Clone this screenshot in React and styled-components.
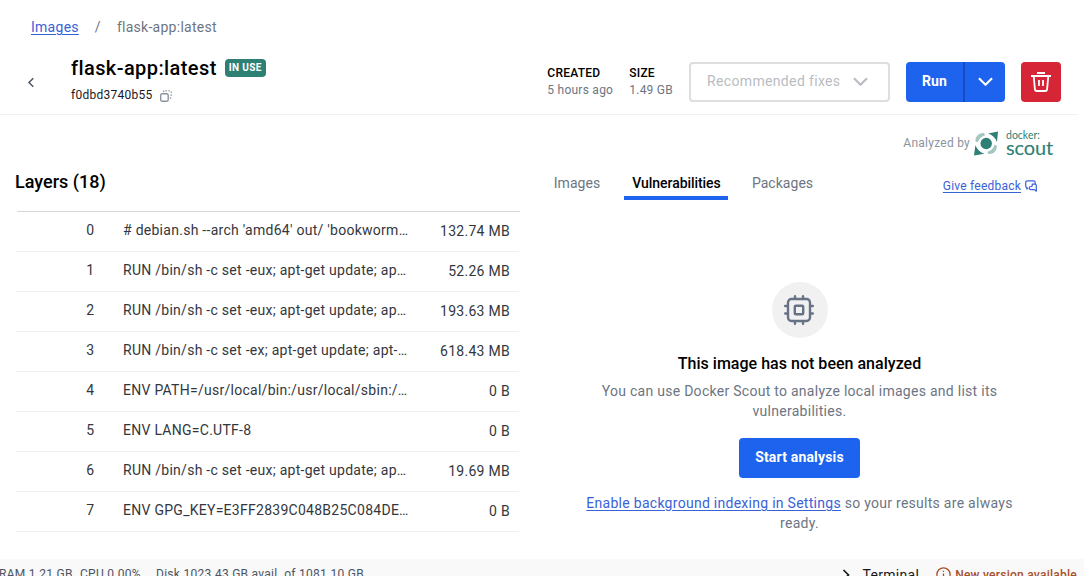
import React from "react";
import styled, { createGlobalStyle } from "styled-components";

const GlobalStyle = createGlobalStyle`
  *, *::before, *::after { box-sizing: border-box; }
  html, body { margin: 0; padding: 0; overflow: hidden; }
  body { background: #fff; color: #000; font-family: Roboto, "Liberation Sans", sans-serif; font-size: 14px; }
  p, h1, h2, h3, ul { margin: 0; padding: 0; }
  button { font-family: inherit; cursor: pointer; }
  svg { display: block; flex: none; }
`;

const Page = styled.div`
  width: 1084px;
  height: 576px;
  overflow: hidden;
  display: flex;
  flex-direction: column;
`;

const Header = styled.header`
  width: 1078px;
  height: 115px;
  flex: none;
  padding-top: 17px;
  border-bottom: 1px solid #eff0f1;
`;

const Breadcrumb = styled.nav`
  display: flex;
  gap: 16px;
  height: 20px;
  padding-left: 31px;
  line-height: 20px;
  letter-spacing: 0.27px;
  color: #6c7583;
`;

const Link = styled.a`
  color: #3a62d7;
  text-decoration: underline;
  text-underline-offset: 2px;
`;

const HeaderRow = styled.div`
  display: flex;
  padding: 18px 17px 0 25px;
  height: 60px;
`;

const BackButton = styled.button`
  width: 12px;
  height: 20px;
  margin: 17px 34px 0 0;
  padding: 0;
  border: 0;
  background: none;
  color: #4b5563;
  display: grid;
  place-items: center;
`;

const TitleBlock = styled.div`
  flex: 1;
`;

const TitleLine = styled.div`
  display: flex;
  align-items: center;
  gap: 8px;
  height: 26px;
`;

const Title = styled.h1`
  font-size: 20px;
  line-height: 26px;
  font-weight: 500;
  letter-spacing: 0.41px;
`;

const Badge = styled.span`
  height: 18px;
  width: 41px;
  border-radius: 4px;
  background: #2e7f74;
  color: #fff;
  font-size: 10px;
  line-height: 18px;
  font-weight: 700;
  text-align: center;
  letter-spacing: 0.4px;
`;

const HashLine = styled.div`
  display: flex;
  align-items: center;
  gap: 7px;
  height: 20px;
  margin-top: 4px;
  font-size: 12px;
  letter-spacing: 0.26px;
  color: #17191e;

  svg {
    margin-top: 2px;
  }
`;

const Meta = styled.dl`
  margin: 10px 16px 0 0;
  display: flex;
  flex-direction: column;
  font-size: 12px;
  line-height: 17px;
`;

const MetaLabel = styled.dt`
  font-weight: 500;
  letter-spacing: 0.25px;
`;

const MetaValue = styled.dd`
  margin: 0;
  letter-spacing: 0.25px;
  color: #6c7583;
`;

const FixesButton = styled.button`
  width: 201px;
  height: 40px;
  margin: 7px 16px 0 0;
  padding: 0 20px 2px 16px;
  display: flex;
  align-items: center;
  justify-content: space-between;
  border: 2px solid #dcdee0;
  border-radius: 4px;
  background: #fff;
  color: #b9bcc1;
  font-size: 14px;
  letter-spacing: 0.35px;
`;

const SplitButton = styled.div`
  display: flex;
  height: 40px;
  margin: 7px 16px 0 0;
  border-radius: 4px;
  overflow: hidden;
`;

const PrimaryButton = styled.button`
  width: ${(p) => p.$width}px;
  height: 40px;
  padding: 0 0 2px;
  border: 0;
  border-radius: ${(p) => (p.$segment ? 0 : 4)}px;
  border-left: ${(p) => (p.$divided ? "2px solid #154bc4" : "0")};
  background: #1d63ed;
  color: #fff;
  font-size: 14px;
  font-weight: 700;
  letter-spacing: 0.18px;
  display: grid;
  place-items: center;
`;

const DeleteButton = styled.button`
  width: 40px;
  height: 40px;
  margin-top: 7px;
  padding: 0;
  border: 0;
  border-radius: 4px;
  background: #d52536;
  color: #fff;
  display: grid;
  place-items: center;
`;

const Main = styled.main`
  display: flex;
  flex: none;
  height: 444px;
`;

const LayersPanel = styled.section`
  width: 520px;
  padding: 55px 0 0 15px;
`;

const LayersTitle = styled.h2`
  font-size: 18px;
  line-height: 24px;
  font-weight: 500;
  letter-spacing: 0;
`;

const LayerList = styled.ul`
  list-style: none;
  margin: 17px 0 0 2px;
  border-top: 1px solid #d5d7da;
`;

const LayerRow = styled.li`
  display: flex;
  align-items: center;
  height: 40px;
  margin: 0 1px 0 -1px;
  padding: 0 9px 1px 0;
  border-bottom: 1px solid #f0f1f2;
  color: #33373d;
  line-height: 20px;
`;

const LayerIndex = styled.span`
  width: 78px;
  padding-bottom: 2px;
  text-align: right;
`;

const LayerCommand = styled.span`
  width: 292px;
  margin-left: 29px;
  padding-bottom: 2px;
  white-space: nowrap;
  overflow: hidden;
  text-overflow: ellipsis;
  letter-spacing: 0.27px;
`;

const LayerSize = styled.span`
  flex: 1;
  text-align: right;
  letter-spacing: 0.28px;
`;

const DetailPanel = styled.section`
  flex: 1;
  display: flex;
  flex-direction: column;
`;

const Attribution = styled.div`
  display: flex;
  align-items: center;
  justify-content: flex-end;
  height: 32px;
  margin-top: 12px;
  padding-right: 30px;
  font-size: 12px;
  letter-spacing: 0.25px;
  color: #8b939f;
`;

const ScoutLogo = styled.div`
  display: flex;
  align-items: center;
  gap: 7px;
  margin-left: 4px;
  color: #2e7f74;
`;

const Wordmark = styled.div`
  display: flex;
  flex-direction: column;
  width: 48px;
  font-family: Lato, sans-serif;
  white-space: nowrap;
`;

const WordSmall = styled.span`
  font-size: 10.5px;
  line-height: 12px;
  margin-top: -2px;
  letter-spacing: 0;
`;

const WordLarge = styled.span`
  font-size: 20px;
  line-height: 15px;
  margin-top: -1px;
  letter-spacing: -0.1px;
  -webkit-text-stroke: 0.1px currentColor;
`;

const TabBar = styled.div`
  display: flex;
  height: 36px;
  margin-top: 6px;
  padding-left: 26px;
`;

const Tab = styled.div`
  width: ${(p) => p.$width}px;
  height: 35px;
  margin-right: 16px;
  padding: 9px 0 0 ${(p) => p.$nudge || 0}px;
  text-align: center;
  line-height: 18px;
  letter-spacing: ${(p) => (p.$active ? -0.06 : 0.04)}px;
  font-weight: ${(p) => (p.$active ? 500 : 400)};
  color: ${(p) => (p.$active ? "#000" : "#6c7583")};
  border-bottom: 4px solid ${(p) => (p.$active ? "#1d63ed" : "transparent")};
`;

const Feedback = styled.div`
  display: flex;
  align-items: center;
  gap: 4px;
  height: 18px;
  margin: 12px 47px 0 auto;
  color: #3a62d7;
  font-size: 12px;
  letter-spacing: 0.22px;
`;

const Empty = styled.div`
  display: flex;
  flex-direction: column;
  align-items: center;
  width: 441px;
  margin: 81px 0 0 59px;
  text-align: center;
`;

const IconDisc = styled.div`
  width: 56px;
  height: 56px;
  margin-left: 1px;
  padding-right: 2px;
  border-radius: 50%;
  background: #f1f1f2;
  color: #677285;
  display: grid;
  place-items: center;
`;

const EmptyTitle = styled.h3`
  margin-top: 14px;
  font-size: 16px;
  line-height: 24px;
  font-weight: 500;
  letter-spacing: 0.02px;
`;

const EmptyText = styled.p`
  margin: ${(p) => p.$top}px 0 ${(p) => p.$bottom || 0}px;
  line-height: 20px;
  letter-spacing: 0.275px;
  color: #6c7583;
  white-space: nowrap;
`;

const StatusBar = styled.footer`
  display: flex;
  flex: none;
  height: 30px;
  padding-top: 1px;
  background: #f9f9fa;
  line-height: 28px;
  font-size: 12px;
  color: #4b5563;
  white-space: nowrap;
`;

const Stat = styled.span`
  width: ${(p) => p.$width}px;
  margin-left: ${(p) => p.$offset || 0}px;
  letter-spacing: 0.27px;
`;

const TerminalLink = styled.div`
  display: flex;
  align-items: center;
  gap: 12px;
  margin-left: auto;
  color: #17191e;
  font-size: 14px;
  letter-spacing: 0.3px;
`;

const Update = styled.div`
  display: flex;
  align-items: center;
  gap: 4px;
  margin: 0 7px 0 17px;
  color: #a8502a;
  font-weight: 500;
  letter-spacing: 0.25px;
`;

const Chevron = ({ width, height, weight }) => (
  <svg width={width} height={height} viewBox="0 0 14 8" fill="none" stroke="currentColor" strokeWidth={weight}>
    <path d="M.9.9 7 7 13.1.9" />
  </svg>
);

const BackIcon = () => (
  <svg width="8" height="11" viewBox="0 0 8 11" fill="none" stroke="currentColor" strokeWidth="1.5">
    <path d="M6.3 1.2 2 5.5l4.3 4.3" />
  </svg>
);

const CopyIcon = () => (
  <svg width="12" height="12" viewBox="0 0 12 12" fill="none" stroke="#8b939f" strokeWidth="1.4">
    <rect x=".7" y="3.8" width="7.5" height="7.5" rx="1.6" />
    <path d="M3.2 1.8 4.2.8M5.5.7h1.3M8.5.7h1.1M11.3 1.5v1.2M11.3 4.5v1.3M11.1 7.6l-1 .8" />
  </svg>
);

const TrashIcon = () => (
  <svg width="20" height="20" viewBox="0 0 20 20" fill="none" stroke="currentColor" strokeWidth="1.8">
    <path d="M6 1h8M0 4h20M2.7 4l1.2 13.1c.1 1.1.8 1.9 1.9 1.9h8.4c1.1 0 1.8-.8 1.9-1.9L17.3 4M8 8v6M12 8v6" />
  </svg>
);

const ScoutMark = () => (
  <svg width="25" height="25" viewBox="0 0 25 25">
    <circle cx="12.2" cy="12.5" r="5.7" fill="#2e7f74" />
    <path d="M24 .6 23 11C21.4 6.9 18.3 3.8 14.1 2.5ZM0 24.6 1.4 14.2c1.6 4.1 4.7 7.2 8.9 8.5Z" fill="#2e7f74" />
    <path d="M10.3 2.2C5.1 1.5 1.1 5.4 1.5 10.4l2.4.9C4.7 7.9 7.4 5.2 10.9 4.4ZM14.1 22.9c5.2.7 9.2-3.2 8.8-8.2l-2.4-.9c-.8 3.4-3.5 6.1-7 6.9Z" fill="#a4c7c0" />
  </svg>
);

const ChatIcon = () => (
  <svg width="12" height="12" viewBox="0 0 12 12" fill="none" stroke="currentColor" strokeWidth="1.2" strokeLinejoin="round">
    <path d="M3.2 7.9 1.9 9V7.6C1.2 7.4.7 6.9.7 6V2.4C.7 1.4 1.3.8 2.3.8h6.3c1 0 1.6.6 1.6 1.6v1.5" />
    <path d="M7.2 4.1h2.6c1 0 1.5.5 1.5 1.5v5.6L9.5 9.6H6c-1.1 0-1.7-.6-1.7-1.6s.6-1.5 1.6-1.5h.2c.7 0 1.1-.4 1.1-1.1Z" />
  </svg>
);

const ChipIcon = () => (
  <svg width="30" height="30" viewBox="0 0 30 30" fill="none" stroke="currentColor" strokeWidth="2.4" strokeLinecap="round">
    <rect x="4" y="4" width="22" height="22" rx="3.4" />
    <rect x="10.8" y="10.8" width="8.4" height="8.4" rx="1" />
    <path d="M11 1.2V3M19 1.2V3M11 27v1.8M19 27v1.8M1.2 11H3M1.2 18.5H3M27 11h1.8M27 18.5h1.8" />
  </svg>
);

const TerminalIcon = () => (
  <svg width="8" height="12" viewBox="0 0 8 12" fill="none" stroke="currentColor" strokeWidth="1.7">
    <path d="m1.5 1 5 5-5 5" />
  </svg>
);

const InfoIcon = () => (
  <svg width="15" height="15" viewBox="0 0 15 15" fill="none" stroke="currentColor" strokeWidth="1.3">
    <circle cx="7.5" cy="7.5" r="6.6" />
    <path d="M7.5 3.7v1.4M7.5 6.5v4.8" />
  </svg>
);

const layers = [
  { command: "# debian.sh --arch 'amd64' out/ 'bookworm…", size: "132.74 MB" },
  { command: "RUN /bin/sh -c set -eux; apt-get update; ap…", size: "52.26 MB" },
  { command: "RUN /bin/sh -c set -eux; apt-get update; ap…", size: "193.63 MB" },
  { command: "RUN /bin/sh -c set -ex; apt-get update; apt-…", size: "618.43 MB" },
  { command: "ENV PATH=/usr/local/bin:/usr/local/sbin:/…", size: "0 B" },
  { command: "ENV LANG=C.UTF-8", size: "0 B" },
  { command: "RUN /bin/sh -c set -eux; apt-get update; ap…", size: "19.69 MB" },
  { command: "ENV GPG_KEY=E3FF2839C048B25C084DE…", size: "0 B" },
];

export default function App() {
  return (
    <>
      <GlobalStyle />
      <Page>
        <Header>
          <Breadcrumb>
            <Link>Images</Link>
            <span>/</span>
            <span>flask-app:latest</span>
          </Breadcrumb>
          <HeaderRow>
            <BackButton aria-label="Back"><BackIcon /></BackButton>
            <TitleBlock>
              <TitleLine>
                <Title>flask-app:latest</Title>
                <Badge>IN USE</Badge>
              </TitleLine>
              <HashLine>f0dbd3740b55 <CopyIcon /></HashLine>
            </TitleBlock>
            <Meta>
              <MetaLabel>CREATED</MetaLabel>
              <MetaValue>5 hours ago</MetaValue>
            </Meta>
            <Meta>
              <MetaLabel>SIZE</MetaLabel>
              <MetaValue>1.49 GB</MetaValue>
            </Meta>
            <FixesButton>
              Recommended fixes
              <Chevron width={15} height={9} weight={2} />
            </FixesButton>
            <SplitButton>
              <PrimaryButton $width={57} $segment>Run</PrimaryButton>
              <PrimaryButton $width={42} $segment $divided aria-label="More run options">
                <Chevron width={15} height={9} weight={2} />
              </PrimaryButton>
            </SplitButton>
            <DeleteButton aria-label="Delete"><TrashIcon /></DeleteButton>
          </HeaderRow>
        </Header>

        <Main>
          <LayersPanel>
            <LayersTitle>Layers (18)</LayersTitle>
            <LayerList>
              {layers.map((layer, i) => (
                <LayerRow key={i}>
                  <LayerIndex>{i}</LayerIndex>
                  <LayerCommand>{layer.command}</LayerCommand>
                  <LayerSize>{layer.size}</LayerSize>
                </LayerRow>
              ))}
            </LayerList>
          </LayersPanel>

          <DetailPanel>
            <Attribution>
              Analyzed by
              <ScoutLogo>
                <ScoutMark />
                <Wordmark>
                  <WordSmall>docker:</WordSmall>
                  <WordLarge>scout</WordLarge>
                </Wordmark>
              </ScoutLogo>
            </Attribution>
            <TabBar>
              <Tab $width={62}>Images</Tab>
              <Tab $width={104} $active $nudge={1}>Vulnerabilities</Tab>
              <Tab $width={76} $nudge={1}>Packages</Tab>
              <Feedback><Link>Give feedback</Link><ChatIcon /></Feedback>
            </TabBar>
            <Empty>
              <IconDisc><ChipIcon /></IconDisc>
              <EmptyTitle>This image has not been analyzed</EmptyTitle>
              <EmptyText $top={5} $bottom={17}>
                You can use Docker Scout to analyze local images and list its<br />vulnerabilities.
              </EmptyText>
              <PrimaryButton $width={121}>Start analysis</PrimaryButton>
              <EmptyText $top={15}>
                <Link>Enable background indexing in Settings</Link> so your results are always<br />ready.
              </EmptyText>
            </Empty>
          </DetailPanel>
        </Main>

        <StatusBar>
          <Stat $width={81} $offset={-1}>RAM 1.21 GB</Stat>
          <Stat $width={76}>CPU 0.00%</Stat>
          <Stat $width={220}>Disk 1023.43 GB avail. of 1081.10 GB</Stat>
          <TerminalLink><TerminalIcon />Terminal</TerminalLink>
          <Update><InfoIcon />New version available</Update>
        </StatusBar>
      </Page>
    </>
  );
}
